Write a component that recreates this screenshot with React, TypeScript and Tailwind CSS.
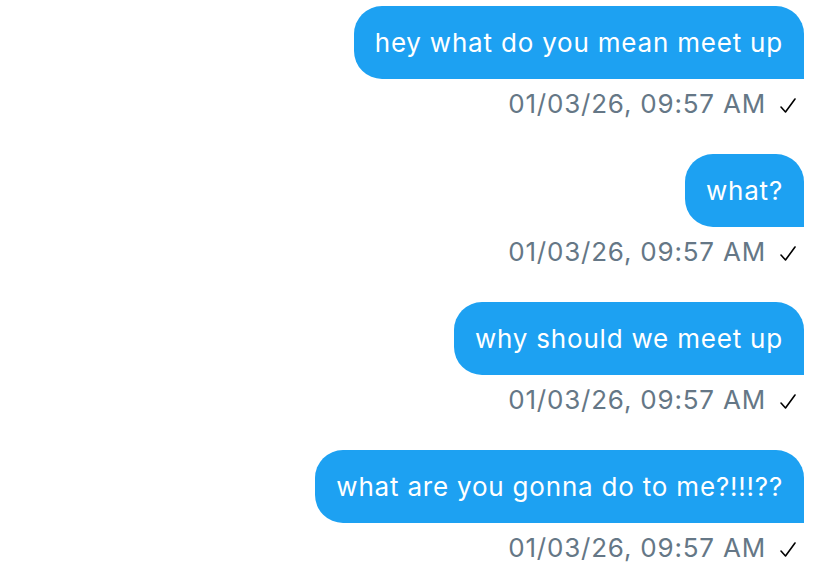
import React from "react";

const messages = [
  "hey what do you mean meet up",
  "what?",
  "why should we meet up",
  "what are you gonna do to me?!!!??",
];

export default function App() {
  return (
    <div
      className="w-[828px] h-[568px] bg-white overflow-hidden flex flex-col items-end pr-[24px] pt-[6px] gap-[34px]"
      style={{ fontFamily: 'Inter, "Liberation Sans", Arial, sans-serif' }}
    >
      {messages.map((m, i) => (
        <div key={i} className="flex flex-col items-end">
          <div className="bg-[#1da1f2] text-white text-[26px] tracking-[0.8px] leading-[37px] px-[21px] py-[18px] rounded-[28px] rounded-br-none">
            {m}
          </div>
          <div className="flex items-center mt-[9px] mr-[7px] text-[26px] tracking-[0.8px] leading-[32px] text-[#657786]">
            <span>01/03/26, 09:57 AM</span>
            <svg
              width="18"
              height="18"
              viewBox="0 0 18 18"
              className="ml-[13px] mt-[3px]"
              fill="none"
              stroke="#000"
              strokeWidth="1.6"
              strokeLinecap="round"
              strokeLinejoin="round"
            >
              <path d="M2 10 L6.5 15 L16 2" />
            </svg>
          </div>
        </div>
      ))}
    </div>
  );
}
